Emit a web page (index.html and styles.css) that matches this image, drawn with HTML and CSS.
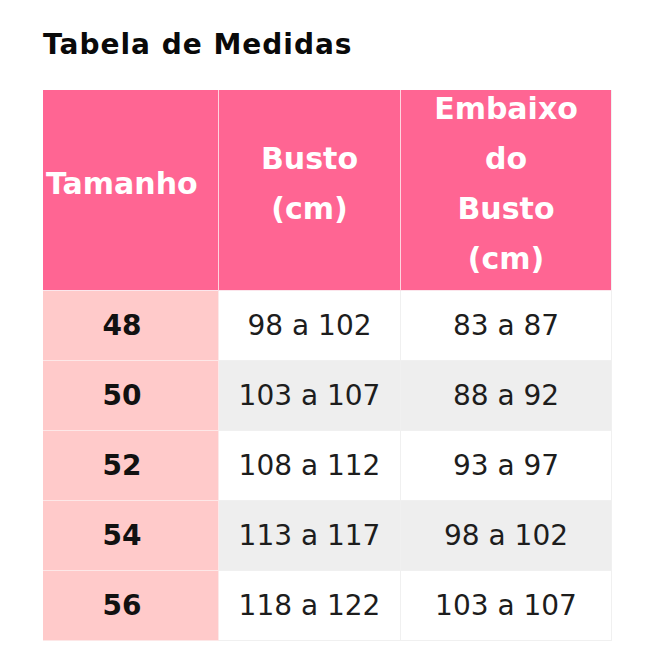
FILE: index.html
```html
<!DOCTYPE html>
<html lang="pt">
<head>
<meta charset="utf-8">
<title>Tabela de Medidas</title>
<link rel="stylesheet" href="styles.css">
</head>
<body>
<main class="page">
  <h1 class="title">Tabela de Medidas</h1>
  <table class="sizes">
    <colgroup>
      <col class="c1"><col class="c2"><col class="c3">
    </colgroup>
    <thead>
      <tr class="head-row">
        <th><span class="hd">Tamanho</span></th>
        <th><span class="hd">Busto<br>(cm)</span></th>
        <th><span class="hd">Embaixo<br>do<br>Busto<br>(cm)</span></th>
      </tr>
    </thead>
    <tbody>
      <tr><td class="size">48</td><td>98 a 102</td><td>83 a 87</td></tr>
      <tr class="alt"><td class="size">50</td><td>103 a 107</td><td>88 a 92</td></tr>
      <tr><td class="size">52</td><td>108 a 112</td><td>93 a 97</td></tr>
      <tr class="alt"><td class="size">54</td><td>113 a 117</td><td>98 a 102</td></tr>
      <tr><td class="size">56</td><td>118 a 122</td><td>103 a 107</td></tr>
    </tbody>
  </table>
</main>
</body>
</html>
```
FILE: styles.css
```css
html, body {
  margin: 0;
  padding: 0;
  background: #ffffff;
}

.page {
  padding: 29px 0 0 43px;
  font-family: "DejaVu Sans", "Noto Sans", sans-serif;
  color: #1b1b1b;
}

.title {
  margin: 0 0 29px 0;
  font-size: 28px;
  line-height: 32px;
  font-weight: 700;
  letter-spacing: 1px;
  color: #0a0a0a;
}

.sizes {
  border-collapse: separate;
  border-spacing: 0;
  table-layout: fixed;
  width: 569px;
}

.c1 { width: 176px; }
.c2 { width: 182px; }
.c3 { width: 211px; }

.head-row { height: 201px; }

.sizes th {
  background: #ff6593;
  color: #ffffff;
  font-size: 30px;
  line-height: 50px;
  font-weight: 700;
  padding: 0;
  text-align: center;
  vertical-align: middle;
  border-right: 1px solid #ffd3df;
  border-bottom: 1px solid #fbe6ec;
}

.hd {
  display: block;
  margin: -6px 0 6px 0;
}

.sizes th:first-child {
  text-align: left;
  padding-left: 3px;
}

.sizes th:last-child {
  border-right: 1px solid #f1f1f1;
}

.sizes tbody tr { height: 70px; }

.sizes td {
  font-size: 28px;
  font-weight: 400;
  text-align: center;
  vertical-align: middle;
  padding: 0 0 0 0;
  background: #ffffff;
  color: #1d1d1d;
  border-right: 1px solid #f0f0f0;
  border-bottom: 1px solid #f0f0f0;
}

.sizes tr.alt td { background: #eeeeee; }

.sizes td.size,
.sizes tr.alt td.size {
  background: #ffcaca;
  font-weight: 700;
  color: #111111;
  padding-right: 17px;
  border-right: 1px solid #fbe9ea;
  border-bottom: 1px solid #fde7e7;
}
```
